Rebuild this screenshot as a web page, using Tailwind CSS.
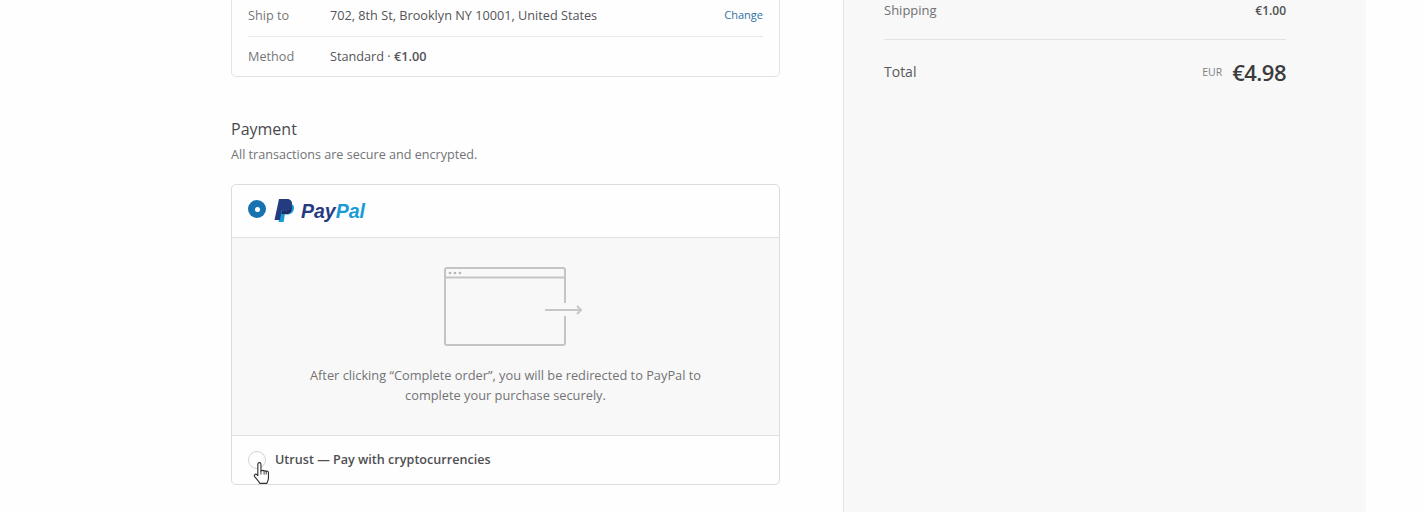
<!DOCTYPE html>
<html>
<head>
<meta charset="utf-8">
<script src="https://cdn.jsdelivr.net/npm/@tailwindcss/browser@4"></script>
</head>
<body class="bg-white">
<div class="h-[525px] overflow-hidden font-['Open_Sans','Noto_Sans',sans-serif]">
<div class="flex h-[512px] overflow-hidden bg-[#fefeff]">
  <main class="w-[843px] shrink-0 pl-[231px] pr-[63px] -mt-[24px]">
    <div class="h-[101px] rounded-[5px] border border-[#e2e2e4] px-[16px] pt-[29px] text-[12.7px] text-[#5d5d5f]">
      <div class="flex h-[31px] items-start border-b border-[#e8e8ea]">
        <span class="w-[82px] text-[#767678]">Ship to</span>
        <span class="flex-1 text-[#545456]">702, 8th St, Brooklyn NY 10001, United States</span>
        <span class="mt-[1px] text-[11px] text-[#2f6f9f]">Change</span>
      </div>
      <div class="flex pt-[10px]">
        <span class="w-[82px] text-[#767678]">Method</span>
        <span class="text-[#545456]">Standard · <span class="font-semibold">€1.00</span></span>
      </div>
    </div>
    <h2 class="mt-[41px] text-[16px] leading-[22px] text-[#4a4a4c]">Payment</h2>
    <p class="mt-[6px] text-[12.6px] leading-[18px] text-[#737375]">All transactions are secure and encrypted.</p>
    <div class="mt-[20px] h-[301px] rounded-[5px] border border-[#dcdcde]">
      <div class="flex h-[53px] items-center gap-[8px] border-b border-[#e0e0e2] pl-[16px]">
        <span class="-mt-[4px] flex size-[18px] items-center justify-center rounded-full bg-[#1773b0]"><span class="size-[5px] rounded-full bg-white"></span></span>
        <svg width="94" height="26" viewBox="0 0 94 26" class="-mt-[1px]">
          <path d="M8 6h8c3 0 4.500 1.600 3.900 5-.7 3.800-3.300 5.500-6.800 5.500H10.800L9.700 24H4.500z" fill="#179bd7"/>
          <path d="M5 1h7.500c3.800 0 6 2 5.400 5.500-.7 4-3.500 6-7.300 6H7.500L6 22H.5z" fill="#253b80"/>
          <path d="M17.900 6.500c-.7 4-3.500 6-7.300 6H8l-.6 3.500h5.700c.8 0 2.700-.5 4-2.500.8-1.500 1-4.500.8-7z" fill="#222d65"/>
          <text x="27" y="20" font-family="'Liberation Sans',sans-serif" font-size="19.500" font-weight="700" font-style="italic" fill="#253b80">Pay<tspan fill="#179bd7">Pal</tspan></text>
        </svg>
      </div>
      <div class="flex h-[198px] flex-col items-center border-b border-[#e0e0e2] bg-[#f8f8f8] pt-[29px]">
        <svg width="140" height="80" viewBox="0 0 140 80" fill="none" stroke="#c4c4c4" stroke-width="2" class="ml-[16px]">
          <path d="M121 36V3a2 2 0 0 0-2-2H3a2 2 0 0 0-2 2v73a2 2 0 0 0 2 2h116a2 2 0 0 0 2-2V49"/>
          <path d="M1 10.500h120"/>
          <path d="M101 43h36M133 39l4 4-4 4" stroke="#c8c6c6"/>
          <circle cx="6" cy="6" r="1.300" fill="#b5b5b5" stroke="none"/>
          <circle cx="11" cy="6" r="1.300" fill="#b5b5b5" stroke="none"/>
          <circle cx="16" cy="6" r="1.300" fill="#b5b5b5" stroke="none"/>
        </svg>
        <p class="mt-[18px] w-[430px] text-center text-[12.8px] leading-[20px] text-[#737375]">After clicking “Complete order”, you will be redirected to PayPal to complete your purchase securely.</p>
      </div>
      <div class="relative flex h-[48px] items-center gap-[9px] pl-[16px]">
        <span class="size-[18px] rounded-full border border-[#d4d4d6]"></span>
        <span class="mt-[1px] text-[12.6px] font-semibold text-[#4f4f51]">Utrust — Pay with cryptocurrencies</span>
        <svg class="absolute left-[20px] top-[25px]" width="20" height="24" viewBox="0 0 18 23">
          <path d="M5 14V3a1.500 1.500 0 0 1 3 0v6.500l1-.3a1.300 1.300 0 0 1 2 .5 1.300 1.300 0 0 1 2 .4 1.300 1.300 0 0 1 2.200.9v5c0 2.500-1 3.500-1.500 5.500H7c-1-2-3-4-5-6.500-1-1.500.5-3 2-2z" fill="#fff" stroke="#333" stroke-width="1.100" stroke-linejoin="round"/>
          <path d="M8 9.500V13M11 9.700V13M13 10.100V13" stroke="#333" stroke-width="0.900" fill="none"/>
        </svg>
      </div>
    </div>
  </main>
  <aside class="w-[523px] shrink-0 border-l border-[#e2e2e4] bg-[#f8f8f8] pl-[40px] pr-[80px] pt-0">
    <div class="flex h-[40px] items-start border-b border-[#e3e3e5] pt-[1px] text-[13px]">
      <span class="flex-1 text-[#717173]">Shipping</span>
      <span class="mt-[1px] text-[12px] font-semibold text-[#4f4f51]">€1.00</span>
    </div>
    <div class="flex items-center pt-[18px]">
      <span class="-mt-[2px] flex-1 text-[14px] text-[#5a5a5c]">Total</span>
      <span class="mr-[10px] mt-[2px] text-[10.500px] text-[#808082]">EUR</span>
      <span class="text-[22px] leading-[28px] font-semibold tracking-[-0.5px] text-[#3c3c3e]">€4.98</span>
    </div>
  </aside>
</div>
</div>
</body>
</html>
